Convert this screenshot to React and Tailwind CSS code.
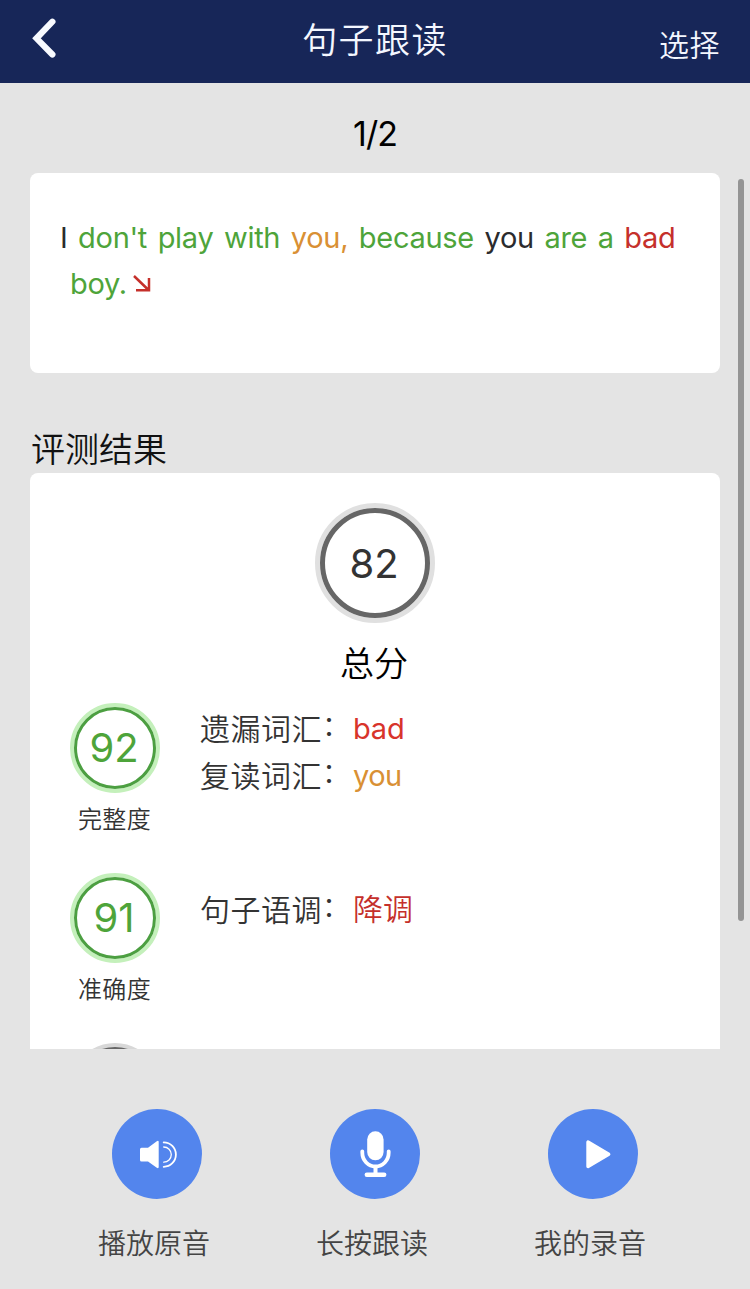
import clsx from 'clsx';

const GREEN = 'text-[#4ea43a]';
const ORANGE = 'text-[#d99034]';
const RED = 'text-[#c5302b]';
const DARK = 'text-[#2b2b2d]';

const words = [
  { text: 'I', color: DARK },
  { text: "don't", color: GREEN },
  { text: 'play', color: GREEN },
  { text: 'with', color: GREEN },
  { text: 'you,', color: ORANGE },
  { text: 'because', color: GREEN },
  { text: 'you', color: DARK },
  { text: 'are', color: GREEN },
  { text: 'a', color: GREEN },
  { text: 'bad', color: RED },
];

const scores = [
  {
    score: 92,
    label: '完整度',
    details: [
      { name: '遗漏词汇', value: 'bad', style: 'text-[29px] font-normal tracking-[-0.200px] text-[#d8342b]' },
      { name: '复读词汇', value: 'you', style: 'text-[29px] font-normal tracking-[-0.500px] text-[#d99034]' },
    ],
  },
  {
    score: 91,
    label: '准确度',
    details: [{ name: '句子语调', value: '降调', style: RED }],
  },
];

const SpeakerIcon = () => (
  <svg width="90" height="90" viewBox="0 0 90 90" fill="none">
    <path d="M29.5 38.800h6.500l8.800-6.600q1.900-1 1.900.8v25q0 1.800-1.900.8l-8.800-6.300h-6.500a1.500 1.500 0 0 1-1.500-1.500v-10.700a1.500 1.500 0 0 1 1.500-1.500z" fill="#fff" />
    <path d="M51.700 33.400a12.200 12.200 0 0 1 0 24.400" stroke="#fff" strokeWidth="1.800" strokeLinecap="round" />
    <path d="M51.700 38a7.600 7.600 0 0 1 0 15.200" stroke="#fff" strokeWidth="1.300" strokeLinecap="round" />
  </svg>
);

const MicIcon = () => (
  <svg width="90" height="90" viewBox="0 0 90 90" fill="none">
    <rect x="37.200" y="22.300" width="16.400" height="29" rx="8.200" fill="#fff" />
    <path d="M32.300 42.300v1.500a13.200 13.700 0 0 0 26.400 0v-1.500" stroke="#fff" strokeWidth="3.800" strokeLinecap="round" />
    <path d="M45.500 57v8" stroke="#fff" strokeWidth="4" />
    <path d="M36.800 65.800h17.400" stroke="#fff" strokeWidth="4.400" strokeLinecap="round" />
  </svg>
);

const PlayIcon = () => (
  <svg width="90" height="90" viewBox="0 0 90 90">
    <path d="M40 33v24.500l20.700-12.250z" fill="#fff" stroke="#fff" strokeWidth="3.400" strokeLinejoin="round" />
  </svg>
);

const actions = [
  { label: '播放原音', Icon: SpeakerIcon },
  { label: '长按跟读', Icon: MicIcon },
  { label: '我的录音', Icon: PlayIcon },
];

const Header = () => (
  <header className="grid h-[83px] shrink-0 grid-cols-3 items-center bg-[#172658] px-[30px] text-[#f4f7ff]">
    <button type="button" className="justify-self-start pb-[7px]">
      <svg width="28" height="42" viewBox="0 0 28 42" fill="none">
        <path d="M22.400 4.700L6.500 21.300L22.400 37.500" stroke="#f8faff" strokeWidth="6.200" strokeLinecap="round" />
      </svg>
    </button>
    <h1 className="justify-self-center pb-0.5 text-[35px] leading-none font-[350] tracking-[1.400px] whitespace-nowrap">句子跟读</h1>
    <button type="button" className="justify-self-end pt-1.5 text-[30px] leading-none font-[350] tracking-[0.500px]">选择</button>
  </header>
);

const SentenceCard = () => (
  <section className="flex h-[200px] flex-col rounded-lg bg-white px-[30px] pt-[42px] text-[29px] leading-[46px] font-normal tracking-[-0.300px]">
    <p className="flex gap-[10.600px] whitespace-nowrap">
      {words.map((word, i) => (
        <span key={i} className={word.color}>{word.text}</span>
      ))}
    </p>
    <p className={clsx('flex items-center gap-[5px] pl-[10px]', GREEN)}>
      boy.
      <svg width="20" height="20" viewBox="0 0 20 20" fill="none" stroke="#c5302b" strokeWidth="2.500">
        <path d="M2 2L16.500 16M17 4v12.300H4" />
      </svg>
    </p>
  </section>
);

const ScoreRow = ({ score, label, details }) => (
  <div className="flex h-[170px] shrink-0">
    <div className="flex w-[170px] shrink-0 flex-col items-center">
      <div className="flex size-[90px] items-center justify-center rounded-full border-4 border-[#c4f0bb]">
        <div className="flex size-full items-center justify-center rounded-full border-[3px] border-[#4c9f41] pr-0.5 text-[40px] leading-none font-normal text-[#4ea43a]">
          {score}
        </div>
      </div>
      <span className="mt-[13px] pr-px text-[24px] leading-[28px] tracking-[0.300px] text-[#333]">{label}</span>
    </div>
    <div className={clsx('flex flex-col text-[30px] leading-[47px]', details.length > 1 ? 'pt-[3px]' : 'pt-[14px]')}>
      {details.map((item) => (
        <div key={item.name} className="flex h-[47px]">
          <span className="tracking-[0.500px] whitespace-nowrap text-[#333]">{item.name}</span>
          <span className="-mt-[3px] w-[31px] text-[28px] text-[#333]">：</span>
          <span className={clsx('-mt-px', item.style)}>{item.value}</span>
        </div>
      ))}
    </div>
  </div>
);

export default function App() {
  return (
    <div
      lang="zh-CN"
      className="relative flex h-[1289px] w-[750px] flex-col overflow-hidden bg-[#e4e4e4] font-['Inter','Noto_Sans_CJK_SC',sans-serif] font-[350]"
    >
      <Header />

      <main className="flex h-[966px] flex-col overflow-hidden px-[30px]">
        <div className="flex h-[90px] shrink-0 items-center justify-center pt-2.5 text-[34px] font-normal tracking-[-1px] text-black">1/2</div>
        <SentenceCard />
        <h2 className="flex h-[100px] shrink-0 items-end pb-1.5 pl-px text-[34px] leading-[34px] font-[350] text-[#111]">评测结果</h2>

        <section className="flex min-h-0 flex-1 flex-col overflow-hidden rounded-t-lg bg-white pt-[30px]">
          <div className="flex h-[200px] shrink-0 flex-col items-center">
            <div className="flex size-[120px] items-center justify-center rounded-full border-[5px] border-[#e0e0e0]">
              <div className="flex size-full items-center justify-center rounded-full border-[5px] border-[#666] pt-px pr-0.5 text-[40px] leading-none font-normal text-[#333]">
                82
              </div>
            </div>
            <span className="mt-[23px] pr-0.5 text-[34px] leading-[36px] text-black">总分</span>
          </div>

          {scores.map((row) => (
            <ScoreRow key={row.label} {...row} />
          ))}

          <div className="flex w-[170px] shrink-0 justify-center">
            <div className="size-[90px] rounded-full border-4 border-[#d8d8d8]">
              <div className="size-full rounded-full border-[3px] border-[#666]" />
            </div>
          </div>
        </section>
      </main>

      <footer className="flex flex-1 justify-between pt-[60px] pr-[104px] pl-[98px]">
        {actions.map(({ label, Icon }) => (
          <div key={label} className="flex flex-col items-center">
            <div className="pl-[6px]">
              <button type="button" className="block size-[90px] rounded-full bg-[#5385ed]">
                <Icon />
              </button>
            </div>
            <span className="mt-7 text-[28px] leading-[34px] text-[#444]">{label}</span>
          </div>
        ))}
      </footer>

      {/* scroll indicator */}
      <div className="absolute top-[179px] right-[6px] h-[742px] w-1.5 rounded-full bg-[#949494]" />
    </div>
  );
}
